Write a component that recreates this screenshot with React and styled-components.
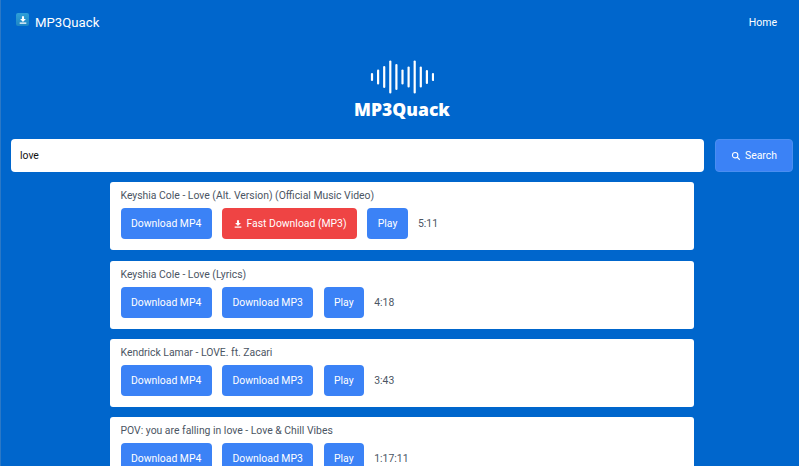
import styled, { createGlobalStyle } from "styled-components";

const GlobalStyle = createGlobalStyle`
  html, body {
    margin: 0;
    padding: 0;
    height: 100%;
    overflow: hidden;
    background: #0066cc;
    font-family: Roboto, "Liberation Sans", sans-serif;
  }
`;

const Page = styled.div`
  height: 466px;
  overflow: hidden;
  background: #0066cc;
  border-left: 1px solid #2b78c6;
  padding: 0 6px 0 10px;
  box-sizing: border-box;
`;

const Navbar = styled.header`
  display: flex;
  align-items: center;
  justify-content: space-between;
  height: 44px;
  padding: 0 16px 0 5px;
`;

const Brand = styled.div`
  display: flex;
  align-items: center;
  gap: 6px;
  color: #fff;
  font-size: 13.2px;
`;

const BrandIcon = styled.span`
  display: flex;
  align-items: center;
  justify-content: center;
  width: 13px;
  height: 13px;
  margin-top: -5px;
  border-radius: 2px;
  background: linear-gradient(180deg, #2f9fd8, #1d86c4);
`;

const NavLink = styled.a`
  color: #fff;
  font-size: 10.5px;
`;

const Hero = styled.div`
  display: flex;
  flex-direction: column;
  align-items: center;
  height: 95px;
  padding-top: 16px;
  box-sizing: border-box;
`;

const Wordmark = styled.div`
  margin-top: 3px;
  color: #fff;
  font-family: "Noto Sans", sans-serif;
  font-size: 17.5px;
  font-weight: 900;
  line-height: 24px;
`;

const SearchRow = styled.form`
  display: flex;
  gap: 11px;
  height: 33px;
`;

const SearchInput = styled.div`
  flex: 1;
  display: flex;
  align-items: center;
  padding: 0 9px;
  background: #fff;
  border-radius: 4px;
  color: #111;
  font-size: 10.4px;
`;

const SearchButton = styled.button`
  width: 78px;
  display: flex;
  align-items: center;
  justify-content: center;
  gap: 4px;
  background: #3b82f6;
  border: 1px solid #4a8ef0;
  border-radius: 4px;
  color: #fff;
  font-family: inherit;
  font-size: 10.4px;
`;

const Results = styled.div`
  display: flex;
  flex-direction: column;
  gap: 10.4px;
  width: 584px;
  margin: 10.2px 0 0 99px;
`;

const Card = styled.div`
  flex: none;
  height: 68px;
  box-sizing: border-box;
  padding: 7px 10.5px 0;
  background: #fff;
  border-radius: 3px;
`;

const Title = styled.div`
  height: 13px;
  line-height: 13px;
  color: #4b5563;
  font-size: 10.4px;
`;

const Actions = styled.div`
  display: flex;
  align-items: center;
  gap: 10.2px;
  margin-top: 6px;
`;

const ActionButton = styled.button`
  height: 31px;
  padding: 0 10.5px;
  display: flex;
  align-items: center;
  gap: 4px;
  background: ${(p) => (p.$fast ? "#ef4444" : "#3b82f6")};
  border: 0;
  border-radius: 4px;
  color: #fff;
  font-family: inherit;
  font-size: 10.4px;
  white-space: nowrap;
`;

const Duration = styled.span`
  color: #4b5563;
  font-size: 10.4px;
`;

const results = [
  { title: "Keyshia Cole - Love (Alt. Version) (Official Music Video)", time: "5:11", fast: true },
  { title: "Keyshia Cole - Love (Lyrics)", time: "4:18" },
  { title: "Kendrick Lamar - LOVE. ft. Zacari", time: "3:43" },
  { title: "POV: you are falling in love - Love & Chill Vibes", time: "1:17:11" },
];

const DownloadIcon = ({ size = 10 }) => (
  <svg width={size} height={size} viewBox="0 0 24 24" fill="#fff">
    <path d="M4 21h16v-3H4zM19 9.5h-4.5V3h-5v6.5H5l7 7z" />
  </svg>
);

const SearchIcon = () => (
  <svg width="10" height="10" viewBox="0 0 24 24" fill="none" stroke="#fff" strokeWidth="2.6">
    <circle cx="10" cy="10" r="6.5" />
    <path d="M15 15l6 6" />
  </svg>
);

const WaveLogo = () => {
  const heights = [6, 13, 20, 31, 24, 13, 19, 31, 19, 12, 6];
  return (
    <svg width="64" height="34" viewBox="0 0 64 34" stroke="#fff" strokeWidth="2.2" strokeLinecap="round">
      {heights.map((h, i) => (
        <line key={i} x1={2 + i * 6.1} x2={2 + i * 6.1} y1={17 - h / 2} y2={17 + h / 2} />
      ))}
    </svg>
  );
};

export default function App() {
  return (
    <>
      <GlobalStyle />
      <Page>
        <Navbar>
          <Brand>
            <BrandIcon>
              <DownloadIcon />
            </BrandIcon>
            MP3Quack
          </Brand>
          <NavLink>Home</NavLink>
        </Navbar>
        <Hero>
          <WaveLogo />
          <Wordmark>MP3Quack</Wordmark>
        </Hero>
        <SearchRow>
          <SearchInput>love</SearchInput>
          <SearchButton type="button">
            <SearchIcon />
            Search
          </SearchButton>
        </SearchRow>
        <Results>
          {results.map((r) => (
            <Card key={r.title}>
              <Title>{r.title}</Title>
              <Actions>
                <ActionButton>Download MP4</ActionButton>
                {r.fast ? (
                  <ActionButton $fast>
                    <DownloadIcon />
                    Fast Download (MP3)
                  </ActionButton>
                ) : (
                  <ActionButton>Download MP3</ActionButton>
                )}
                <ActionButton>Play</ActionButton>
                <Duration>{r.time}</Duration>
              </Actions>
            </Card>
          ))}
        </Results>
      </Page>
    </>
  );
}
